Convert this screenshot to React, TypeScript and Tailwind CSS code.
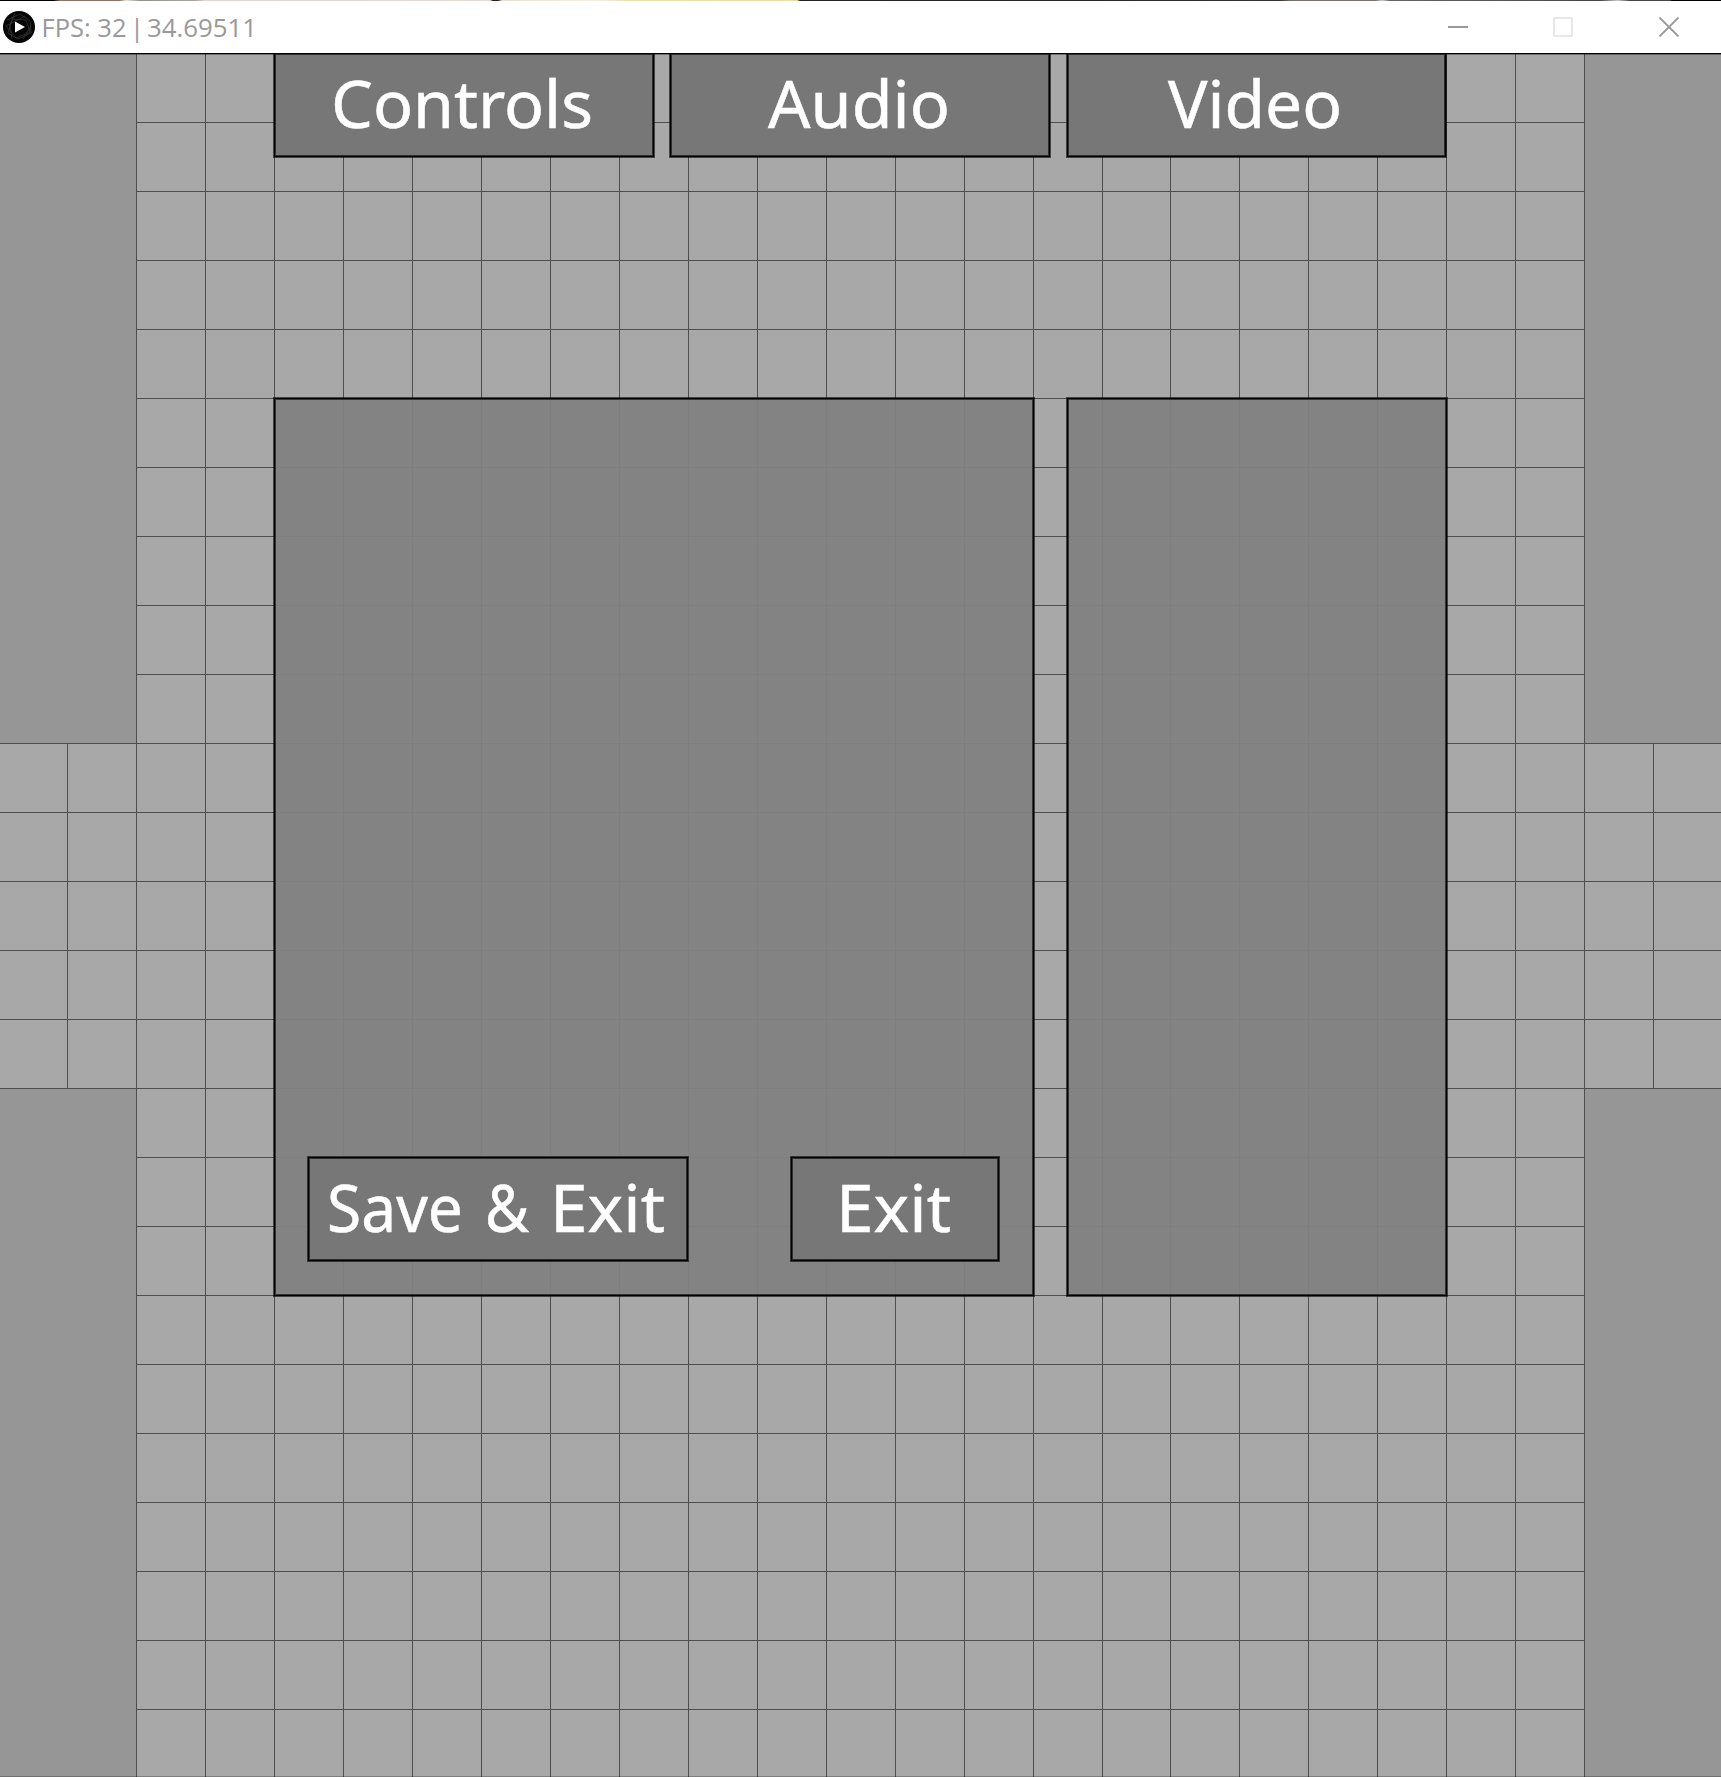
import React from "react";

const SIZE = 25;

// Side corridors span rows 10 to 14; everything else outside the main room is void.
const isVoid = (row: number, col: number) =>
  (col < 2 || col > 22) && (row < 10 || row > 14);

function Tile({ row, col }: { row: number; col: number }) {
  const empty = isVoid(row, col);
  const left = col > 0 && !(empty && isVoid(row, col - 1));
  const top = row > 0 && !(empty && isVoid(row - 1, col));
  return (
    <div
      className={[
        "border-[#4e4e4e]",
        empty ? "bg-[#969696]" : "bg-[#a8a8a8]",
        left ? "border-l" : "",
        top ? "border-t" : "",
      ].join(" ")}
    />
  );
}

function Floor() {
  const cells = [];
  for (let r = 0; r < SIZE; r++)
    for (let c = 0; c < SIZE; c++) cells.push(<Tile key={r * SIZE + c} row={r} col={c} />);
  return (
    <div className="col-start-1 row-start-1 grid grid-cols-[67px_repeat(15,69px)_68px_repeat(7,69px)_68px] grid-rows-[repeat(24,69px)_68px]">
      {cells}
    </div>
  );
}

const edge =
  "border border-black/60 bg-clip-padding shadow-[inset_0_0_0_1px_#000,inset_0_0_0_2px_rgba(0,0,0,0.6)]";

type Word = { text: string; x: number; width: number };

function Label({ words, className }: { words: Word[]; className: string }) {
  return (
    <svg className={"block h-[80px] w-px overflow-visible " + className} viewBox="0 0 1 80">
      {words.map((w) => (
        <text
          key={w.text}
          x={w.x}
          y="60"
          fill="#ffffff"
          stroke="#ffffff"
          strokeWidth="0.5"
          fontSize="65"
          fontFamily="'Noto Sans', 'Open Sans', sans-serif"
          textLength={w.width}
          lengthAdjust="spacingAndGlyphs"
        >
          {w.text}
        </text>
      ))}
    </svg>
  );
}

function Button({ words, box, nudge }: { words: Word[]; box: string; nudge: string }) {
  return (
    <button className={`flex h-[106px] items-start bg-[#777777] ${edge} ${box}`}>
      <Label words={words} className={`mt-[15px] ${nudge}`} />
    </button>
  );
}

function TitleBar() {
  return (
    <header className="flex h-[53px] flex-col bg-white">
      <div className="h-px w-full bg-[linear-gradient(90deg,#000_0_53px,#8a7468_60px_120px,#e8e8e0_126px,#8f9088_140px,#aaa89c_195px,#ddd6cf_205px,#e4ddd4_490px,#222_493px_498px,#e8e0d4_502px,#f4efe4_600px,#ecdcb0_630px,#ecd9ae_797px,#222_800px,#2c2a2a_1150px,#333_1280px,#77706a_1290px_1375px,#ccc_1382px,#666_1390px,#444_1600px,#ccc_1618px,#444_1630px,#444_1670px,#000_1672px)]" />
      <div className="flex h-[51px] items-center">
        <svg className="ml-[3px] size-8" viewBox="0 0 32 32">
          <circle cx="16" cy="16" r="16" fill="#050505" />
          <path
            d="M4 9 17 3l10 7 1 12-13 6L5 22 9 8l14 1 4 12-14 6L3 15 22 5M12 2l-5 12 2 14M20 28l8-13"
            fill="none"
            stroke="#3c3c3c"
            strokeWidth=".7"
          />
          <path d="M12 10.500 22 16 12 21.500Z" fill="#fff" />
        </svg>
        <div className="ml-[8px] flex-1">
          <svg
            className="block h-[40px] w-[214px] overflow-visible"
            viewBox="0 0 214 40"
            fill="#999999"
            fontSize="25.500"
            fontFamily="'Open Sans', 'Noto Sans', sans-serif"
          >
            <text x="-1.500" y="30" textLength="85" lengthAdjust="spacingAndGlyphs">FPS: 32</text>
            <text x="87" y="30">|</text>
            <text x="104" y="30" textLength="110" lengthAdjust="spacingAndGlyphs">34.69511</text>
          </svg>
        </div>
        <svg className="h-[20px] w-[273px]" viewBox="0 0 273 20" fill="none">
          <path d="M0 10H20" stroke="#999" strokeWidth="2" />
          <rect x="106" y="1" width="18" height="18" stroke="#e8e8e8" strokeWidth="2" />
          <path d="M211.500 .5 230.500 19.500M230.500 .5 211.500 19.500" stroke="#999" strokeWidth="1.800" />
        </svg>
      </div>
    </header>
  );
}

export default function App() {
  return (
    <div className="h-[1777px] w-[1721px] overflow-hidden">
      <TitleBar />
      <main className="grid h-[1724px]">
        <Floor />
        <div className="z-10 col-start-1 row-start-1 border-t border-b border-t-black border-b-black/25 shadow-[inset_0_1px_0_rgba(0,0,0,0.35)]">
          <nav className="flex h-[104px] items-end overflow-hidden pl-[273px]">
            <Button words={[{ text: "Controls", x: 0, width: 262 }]} box="w-[382px] shrink-0" nudge="ml-[57px]" />
            <Button words={[{ text: "Audio", x: 0, width: 182 }]} box="ml-[14px] w-[382px] shrink-0" nudge="ml-[98px]" />
            <Button words={[{ text: "Video", x: 0, width: 174 }]} box="ml-[15px] w-[381px] shrink-0" nudge="ml-[101px]" />
          </nav>
          <div className="mt-[239px] flex gap-[31px] pl-[273px]">
            <section className={`flex h-[900px] w-[762px] items-start bg-[#818181]/95 pl-[33px] pt-[758px] ${edge}`}>
              <Button
                words={[
                  { text: "Save", x: -1, width: 136 },
                  { text: "&", x: 157, width: 44 },
                  { text: "Exit", x: 222, width: 115 },
                ]}
                box="w-[382px]"
                nudge="ml-[20px]"
              />
              <Button words={[{ text: "Exit", x: 0, width: 115 }]} box="ml-[101px] w-[210px]" nudge="ml-[45px]" />
            </section>
            <section className={`h-[900px] w-[382px] bg-[#818181]/95 ${edge}`} />
          </div>
        </div>
      </main>
    </div>
  );
}
